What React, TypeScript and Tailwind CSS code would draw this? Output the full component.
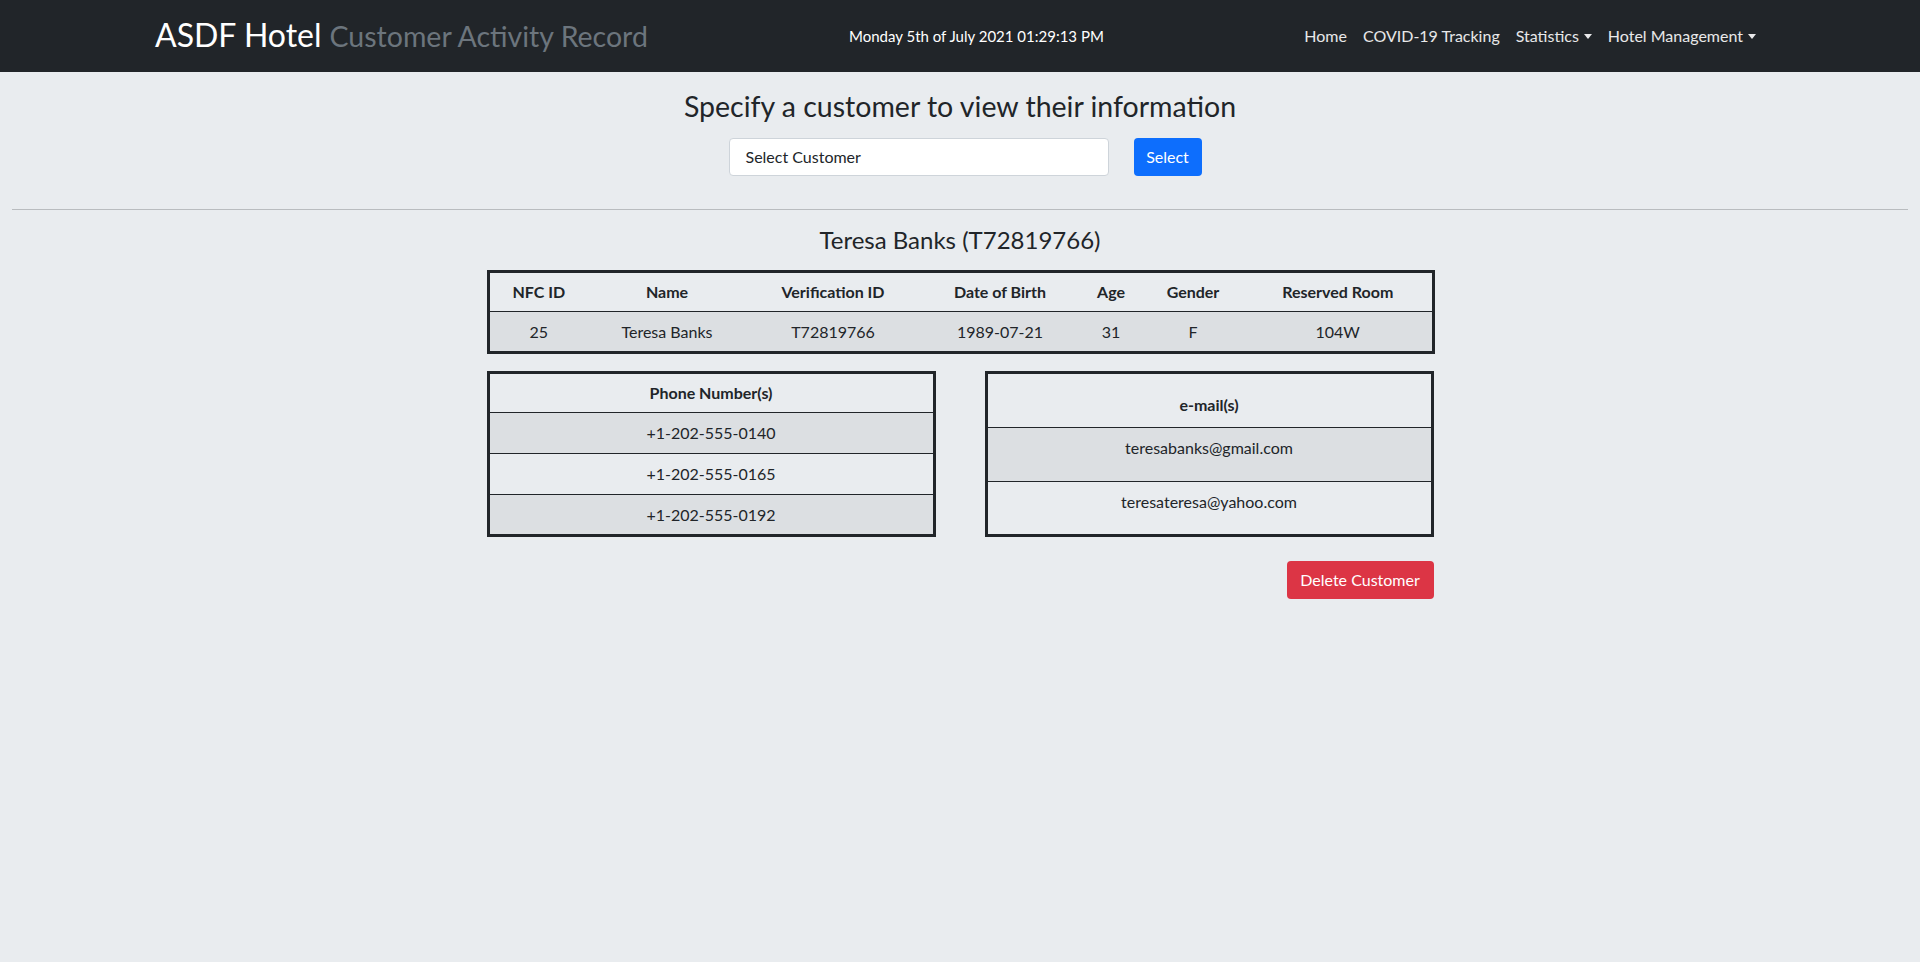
import React from 'react';

const customer = {
  nfcId: 25,
  name: 'Teresa Banks',
  verificationId: 'T72819766',
  dob: '1989-07-21',
  age: 31,
  gender: 'F',
  room: '104W',
};

const phones = ['+1-202-555-0140', '+1-202-555-0165', '+1-202-555-0192'];
const emails = ['teresabanks@gmail.com', 'teresateresa@yahoo.com'];

const columns = [
  { label: 'NFC ID', w: 'w-[100px]' },
  { label: 'Name', w: 'w-[158px]' },
  { label: 'Verification ID', w: 'w-[174px]' },
  { label: 'Date of Birth', w: 'w-[160px]' },
  { label: 'Age', w: 'w-[62px]' },
  { label: 'Gender', w: 'w-[102px]' },
  { label: 'Reserved Room', w: 'w-[189px]' },
];

function Caret() {
  return <span className="ml-[5px] inline-block align-[3px] border-x-[4px] border-x-transparent border-t-[5px] border-t-white/90" />;
}

export default function App() {
  const row = [customer.nfcId, customer.name, customer.verificationId, customer.dob, customer.age, customer.gender, customer.room];

  return (
    <div className="min-h-[962px] bg-[#e9ecef] text-[#212529] text-base font-['Lato','Noto_Sans',sans-serif]">
      {/* navbar */}
      <nav className="h-[72px] bg-[#212529] flex items-center pl-[155px] pr-[164px]">
        <div className="flex items-baseline gap-[8px] w-[694px] -mt-[3px]">
          <span className="text-[32px] text-white leading-none">ASDF Hotel</span>
          <span className="text-[28.5px] text-[#6c757d] leading-none">Customer Activity Record</span>
        </div>
        <div className="text-white text-[15px]">Monday 5th of July 2021 01:29:13 PM</div>
        <ul className="ml-auto flex items-center text-[16px] text-white/90">
          <li className="px-[8px]">Home</li>
          <li className="px-[8px]">COVID-19 Tracking</li>
          <li className="px-[8px]">Statistics<Caret /></li>
          <li className="pl-[8px]">Hotel Management<Caret /></li>
        </ul>
      </nav>

      <h3 className="mt-[17px] text-center text-[28.5px] leading-[34px]">Specify a customer to view their information</h3>

      <div className="mt-[15px] flex justify-center gap-[25px] pl-[10px]">
        <div className="w-[380px] h-[38px] bg-white border border-[#ced4da] rounded-[4px] flex items-center pl-[16px] text-[16px]">Select Customer</div>
        <button className="h-[38px] w-[68px] bg-[#0d6efd] text-white text-[16px] rounded-[4px]">Select</button>
      </div>

      <hr className="mt-[33px] mx-[12px] border-t border-[#b9bcbf]" />

      <h4 className="mt-[15px] text-center text-[24px] leading-[29px]">{customer.name} ({customer.verificationId})</h4>

      <div className="w-[947px] mx-auto mt-[16px]">
        <table className="w-[945px] border-[3px] border-[#212529] border-collapse text-[16px] text-center table-fixed">
          <thead>
            <tr className="border-b border-[#212529]">
              {columns.map(c => (
                <th key={c.label} className={`${c.w} h-[40px] px-[8px] font-bold`}>{c.label}</th>
              ))}
            </tr>
          </thead>
          <tbody>
            <tr className="bg-[#dcdfe2]">
              {row.map((v, i) => (
                <td key={i} className="h-[41px] px-[8px]">{v}</td>
              ))}
            </tr>
          </tbody>
        </table>

        <div className="mt-[17px] grid grid-cols-2 gap-[49px]">
          <table className="w-full border-[3px] border-[#212529] border-collapse text-[16px] text-center">
            <thead>
              <tr className="border-b border-[#212529]">
                <th className="h-[40px] font-bold">Phone Number(s)</th>
              </tr>
            </thead>
            <tbody>
              {phones.map((p, i) => (
                <tr key={p} className={`border-b border-[#212529] last:border-b-0 ${i % 2 === 0 ? 'bg-[#dcdfe2]' : ''}`}>
                  <td className="h-[41px]">{p}</td>
                </tr>
              ))}
            </tbody>
          </table>

          <table className="w-full h-[165px] border-[3px] border-[#212529] border-collapse text-[16px] text-center">
            <thead>
              <tr className="border-b border-[#212529]">
                <th className="h-[55px] align-bottom pb-[10px] font-bold">e-mail(s)</th>
              </tr>
            </thead>
            <tbody>
              {emails.map((e, i) => (
                <tr key={e} className={`border-b border-[#212529] last:border-b-0 ${i % 2 === 0 ? 'bg-[#dcdfe2]' : ''}`}>
                  <td className="h-[54px] align-top pt-[8px]">{e}</td>
                </tr>
              ))}
            </tbody>
          </table>
        </div>

        <div className="mt-[24px] flex justify-end">
          <button className="h-[38px] w-[147px] bg-[#dc3545] text-white text-[16px] rounded-[4px]">Delete Customer</button>
        </div>
      </div>
    </div>
  );
}
